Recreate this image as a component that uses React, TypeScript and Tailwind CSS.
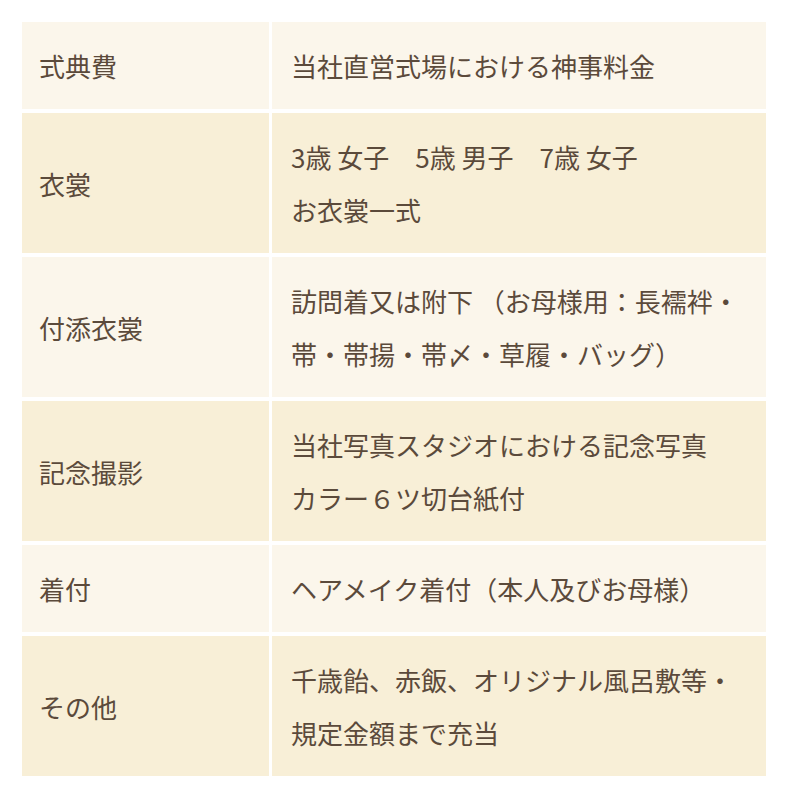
const ROWS: { label: string; lines: string[]; dark: boolean }[] = [
  { label: "式典費", lines: ["当社直営式場における神事料金"], dark: false },
  { label: "衣裳", lines: ["3歳 女子　5歳 男子　7歳 女子", "お衣裳一式"], dark: true },
  {
    label: "付添衣裳",
    lines: ["訪問着又は附下 （お母様用：長襦袢・", "帯・帯揚・帯〆・草履・バッグ）"],
    dark: false,
  },
  {
    label: "記念撮影",
    lines: ["当社写真スタジオにおける記念写真", "カラー６ツ切台紙付"],
    dark: true,
  },
  { label: "着付", lines: ["ヘアメイク着付（本人及びお母様）"], dark: false },
  {
    label: "その他",
    lines: ["千歳飴、赤飯、オリジナル風呂敷等・", "規定金額まで充当"],
    dark: true,
  },
];

export default function App() {
  return (
    <div
      className="min-h-[800px] w-[788px] bg-white pl-[22px] pt-[22px] text-[26px] leading-[53px] text-[#5b4a3b]"
      style={{ fontFamily: '"Noto Sans CJK JP", "Noto Sans", sans-serif' }}
    >
      <div className="grid w-[744px] grid-cols-[247px_494px] gap-x-[3px] gap-y-[4px]">
        {ROWS.map((row) => (
          <div key={row.label} className="contents">
            <div
              className={`flex items-center py-[17px] pl-[17px] ${row.dark ? "bg-[#f8efd7]" : "bg-[#fbf6eb]"}`}
            >
              {row.label}
            </div>
            <div
              className={`flex flex-col justify-center py-[17px] pl-[19px] whitespace-pre ${row.dark ? "bg-[#f8efd7]" : "bg-[#fbf6eb]"}`}
            >
              {row.lines.map((line) => (
                <span key={line}>{line}</span>
              ))}
            </div>
          </div>
        ))}
      </div>
    </div>
  );
}
